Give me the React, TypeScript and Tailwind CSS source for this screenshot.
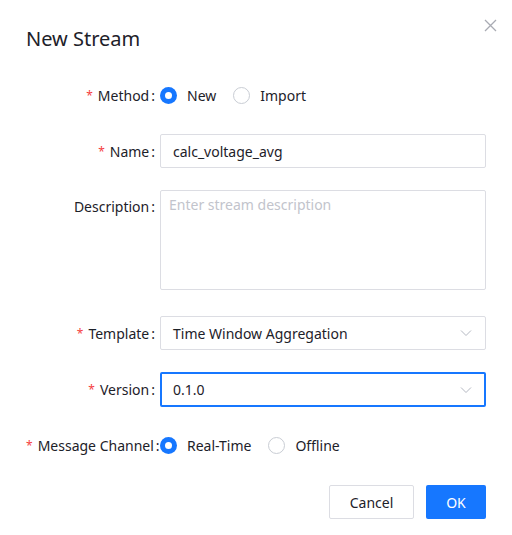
import React from "react";

const font = { fontFamily: '"Noto Sans", "Open Sans", Arial, sans-serif' };

function Radio({ checked, label }: { checked: boolean; label: string }) {
  return (
    <div className="flex items-center">
      {checked ? (
        <span className="box-border flex h-[17px] w-[17px] items-center justify-center rounded-full bg-[#1677ff]">
          <span className="h-[7px] w-[7px] rounded-full bg-white" />
        </span>
      ) : (
        <span className="box-border h-[17px] w-[17px] rounded-full border border-[#c9cdd4] bg-white" />
      )}
      <span className="ml-[10px] text-[14px] text-[#1d2129]">{label}</span>
    </div>
  );
}

function Label({ text, required }: { text: string; required?: boolean }) {
  return (
    <div className="w-[129px] shrink-0 whitespace-nowrap text-right text-[14px] text-[#1d2129]">
      {required && <span className="mr-[5px] align-[1px] text-[12px] text-[#f53f3f]">*</span>}
      {text}
      <span className="ml-[2px]">:</span>
    </div>
  );
}

function Chevron() {
  return (
    <svg width="12" height="8" viewBox="0 0 12 8" fill="none">
      <path d="M1 1.5L6 6.5L11 1.5" stroke="#b4b8c2" strokeWidth="1" />
    </svg>
  );
}

export default function App() {
  return (
    <div className="relative h-[535px] w-[512px] bg-white" style={font}>
      <button className="absolute right-[15px] top-[19px] text-[#a9abb3]">
        <svg width="13" height="13" viewBox="0 0 13 13" fill="none">
          <path d="M1 1L12 12M12 1L1 12" stroke="currentColor" strokeWidth="1.3" />
        </svg>
      </button>
      <div className="px-[26px] pt-[25px]">
        <h1 className="text-[20px] leading-[28px] text-[#1d2129]">New Stream</h1>

        <div className="mt-[25px] flex h-[34px] items-center">
          <Label text="Method" required />
          <div className="ml-[5px] flex items-center gap-[17px]">
            <Radio checked label="New" />
            <Radio checked={false} label="Import" />
          </div>
        </div>

        <div className="mt-[22px] flex h-[34px] items-center">
          <Label text="Name" required />
          <div className="ml-[5px] flex h-[34px] flex-1 items-center rounded-[2px] border border-[#dcdde3] px-[12px] text-[14px] text-[#1d2129]">
            calc_voltage_avg
          </div>
        </div>

        <div className="mt-[22px] flex items-start">
          <div className="pt-[6px]">
            <Label text="Description" />
          </div>
          <div className="ml-[5px] h-[100px] flex-1 rounded-[2px] border border-[#dcdde3] px-[8px] pt-[3px] text-[14px] text-[#c2c4cc]">
            Enter stream description
          </div>
        </div>

        <div className="mt-[26px] flex h-[34px] items-center">
          <Label text="Template" required />
          <div className="ml-[5px] flex h-[34px] flex-1 items-center justify-between rounded-[2px] border border-[#dcdde3] pl-[12px] pr-[13px] text-[14px] text-[#1d2129]">
            <span>Time Window Aggregation</span>
            <Chevron />
          </div>
        </div>

        <div className="mt-[22px] flex h-[35px] items-center">
          <Label text="Version" required />
          <div className="ml-[5px] flex h-[35px] flex-1 items-center justify-between rounded-[2px] border-2 border-[#1677ff] pl-[11px] pr-[12px] text-[14px] text-[#1d2129]">
            <span>0.1.0</span>
            <Chevron />
          </div>
        </div>

        <div className="mt-[21px] flex h-[34px] items-center">
          <Label text="Message Channel" required />
          <div className="ml-[5px] flex items-center gap-[17px]">
            <Radio checked label="Real-Time" />
            <Radio checked={false} label="Offline" />
          </div>
        </div>

        <div className="mt-[23px] flex justify-end gap-[12px]">
          <button className="h-[34px] w-[85px] rounded-[2px] border border-[#dcdde3] bg-white text-[14px] text-[#1d2129]">
            Cancel
          </button>
          <button className="h-[34px] w-[60px] rounded-[2px] bg-[#1677ff] text-[14px] text-white">
            OK
          </button>
        </div>
      </div>
    </div>
  );
}
